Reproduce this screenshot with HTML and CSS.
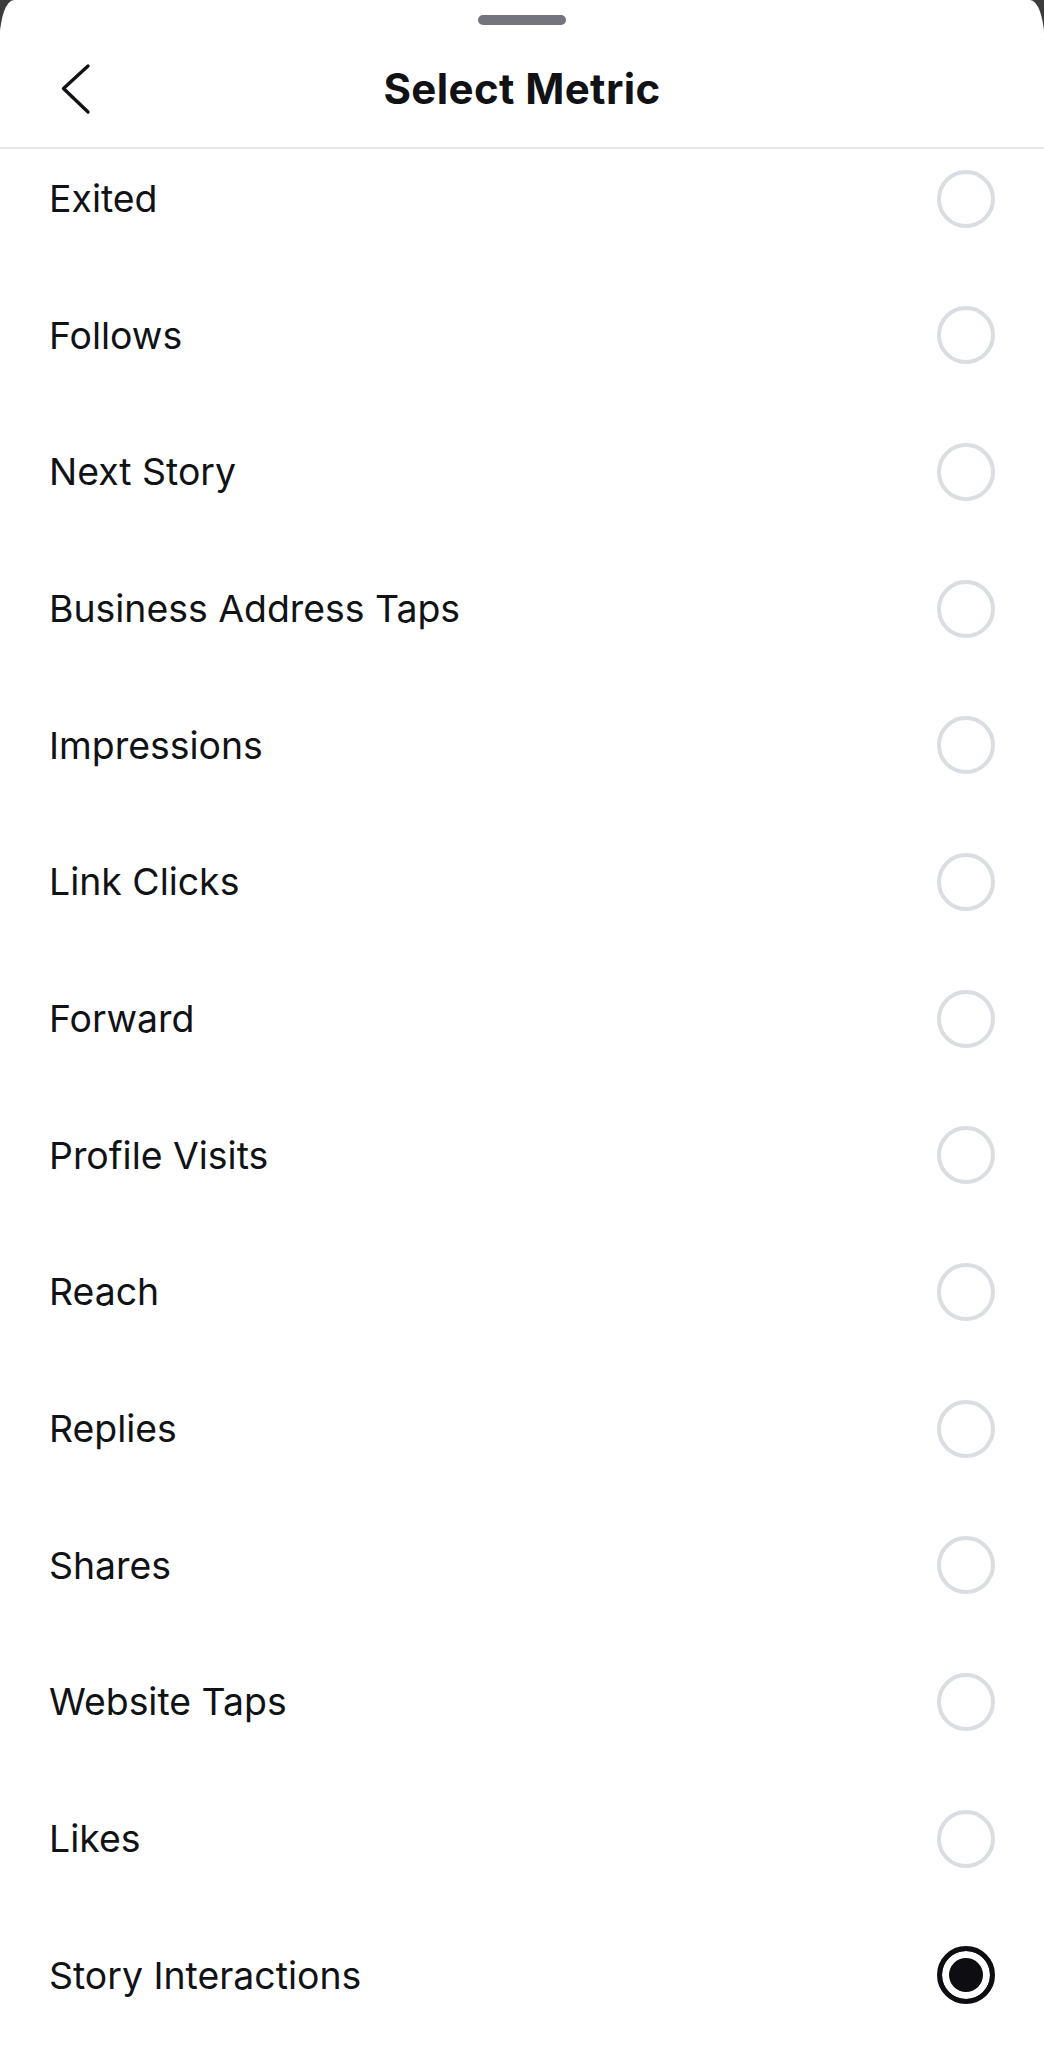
FILE: index.html
```html
<!DOCTYPE html>
<html lang="en">
<head>
<meta charset="utf-8">
<title>Select Metric</title>
<link rel="stylesheet" href="styles.css">
</head>
<body>
<div class="sheet">
  <div class="grabber"><span class="handle"></span></div>
  <header class="nav">
    <button class="back" aria-label="Back">
      <svg width="32" height="52" viewBox="0 0 32 52" fill="none">
        <path d="M27 3 L2.5 25.5 L27 49" stroke="#111216" stroke-width="3.4" stroke-linecap="round" stroke-linejoin="round"/>
      </svg>
    </button>
    <h1 class="title">Select Metric</h1>
    <span class="spacer"></span>
  </header>
  <ul class="list">
    <li class="row"><span class="label">Exited</span><span class="radio"></span></li>
    <li class="row"><span class="label">Follows</span><span class="radio"></span></li>
    <li class="row"><span class="label">Next Story</span><span class="radio"></span></li>
    <li class="row"><span class="label">Business Address Taps</span><span class="radio"></span></li>
    <li class="row"><span class="label">Impressions</span><span class="radio"></span></li>
    <li class="row"><span class="label">Link Clicks</span><span class="radio"></span></li>
    <li class="row"><span class="label">Forward</span><span class="radio"></span></li>
    <li class="row"><span class="label">Profile Visits</span><span class="radio"></span></li>
    <li class="row"><span class="label">Reach</span><span class="radio"></span></li>
    <li class="row"><span class="label">Replies</span><span class="radio"></span></li>
    <li class="row"><span class="label">Shares</span><span class="radio"></span></li>
    <li class="row"><span class="label">Website Taps</span><span class="radio"></span></li>
    <li class="row"><span class="label">Likes</span><span class="radio"></span></li>
    <li class="row"><span class="label">Story Interactions</span><span class="radio selected"></span></li>
  </ul>
</div>
</body>
</html>
```
FILE: styles.css
```css
* { box-sizing: border-box; }
html, body {
  margin: 0;
  padding: 0;
  background: #3c3c3f;
}
body {
  font-family: Inter, "Liberation Sans", Arial, sans-serif;
  color: #111216;
  width: 1044px;
  height: 2048px;
  overflow: hidden;
}
.sheet {
  background: #ffffff;
  border-top-left-radius: 14px 38px;
  border-top-right-radius: 14px 38px;
  height: 2048px;
  overflow: hidden;
}
.grabber {
  height: 25px;
  padding-top: 15px;
  display: flex;
  justify-content: center;
}
.handle {
  width: 88px;
  height: 10px;
  border-radius: 5px;
  background: #73747d;
}
.nav {
  position: relative;
  z-index: 1;
  background: #ffffff;
  height: 124px;
  padding: 5px 0 0 0;
  border-bottom: 2px solid #e7e7ea;
  display: grid;
  grid-template-columns: 1fr auto 1fr;
  align-items: center;
}
.back {
  justify-self: start;
  margin-left: 61px;
  padding: 0;
  border: 0;
  background: none;
  display: flex;
}
.title {
  margin: 0;
  font-size: 42px;
  font-weight: 700;
  letter-spacing: 0.4px;
  line-height: 1;
}
.list {
  list-style: none;
  margin: -18.8px 0 0 0;
  padding: 0;
}
.row {
  height: 136.7px;
  display: flex;
  align-items: center;
  justify-content: space-between;
  padding: 0 49px 0 49px;
}
.label {
  font-size: 37.4px;
  font-weight: 400;
  line-height: 1;
}
.radio {
  width: 58px;
  height: 58px;
  border-radius: 50%;
  border: 4px solid #dadde2;
  flex: none;
}
.radio.selected {
  border: 5px solid #0d0d12;
  background: #0d0d12;
  box-shadow: inset 0 0 0 7px #ffffff;
}
```
